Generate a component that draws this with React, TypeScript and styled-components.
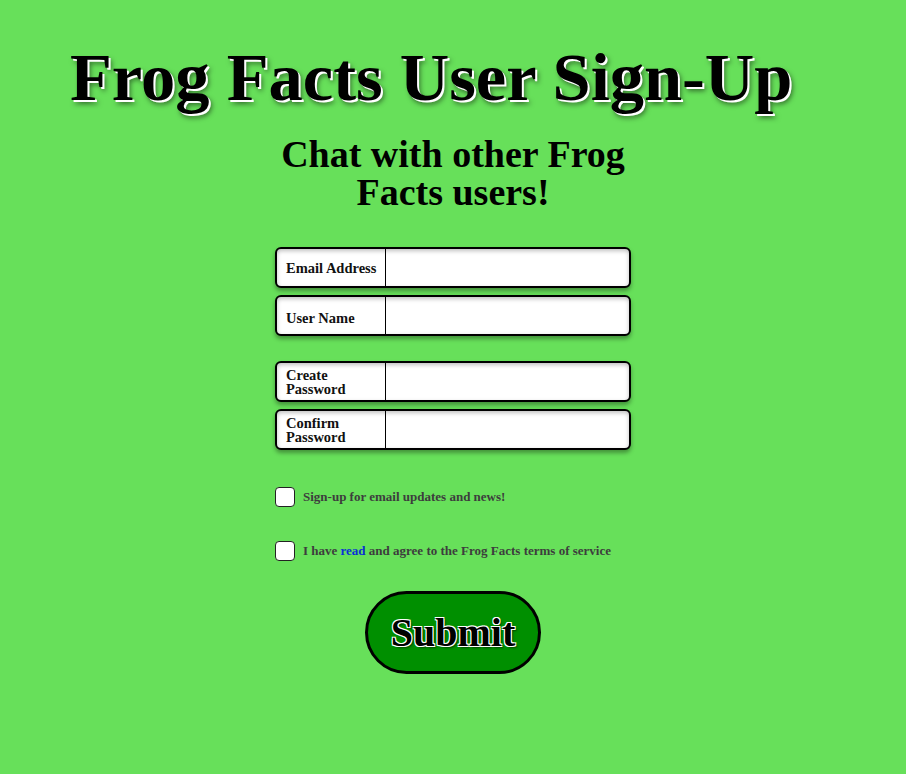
import React from 'react';
import styled, { createGlobalStyle } from 'styled-components';

const GlobalStyle = createGlobalStyle`
  html, body {
    margin: 0;
    padding: 0;
    background: #67e05a;
  }
  body {
    font-family: "Liberation Serif", "Times New Roman", serif;
  }
`;

const fields = [
  { id: 'email', label: 'Email Address', type: 'email' },
  { id: 'user', label: 'User Name', type: 'text', low: true },
];

const passwords = [
  { id: 'pass', label: 'Create Password', type: 'password' },
  { id: 'confirm', label: 'Confirm Password', type: 'password' },
];

const SignUp: React.FC = () => {
  return (
    <Page>
      <GlobalStyle />
      <Title>Frog Facts User Sign-Up</Title>
      <Column>
        <Subtitle>Chat with other Frog Facts users!</Subtitle>
        <Group>
          {fields.map(f => (
            <FieldRow key={f.id}>
              <FieldLabel htmlFor={f.id} $low={f.low}>{f.label}</FieldLabel>
              <FieldInput id={f.id} type={f.type} />
            </FieldRow>
          ))}
        </Group>
        <Group>
          {passwords.map(f => (
            <FieldRow key={f.id}>
              <FieldLabel htmlFor={f.id}>{f.label}</FieldLabel>
              <FieldInput id={f.id} type={f.type} />
            </FieldRow>
          ))}
        </Group>
        <Checks>
          <CheckRow>
            <CheckBox type="checkbox" />
            <CheckText>Sign-up for email updates and news!</CheckText>
          </CheckRow>
          <CheckRow>
            <CheckBox type="checkbox" />
            <CheckText>
              I have <ReadLink href="#">read</ReadLink> and agree to the Frog Facts terms of service
            </CheckText>
          </CheckRow>
        </Checks>
        <SubmitButton type="button">Submit</SubmitButton>
      </Column>
    </Page>
  );
};

const Page = styled.div`
  width: 100%;
  min-height: 774px;
  background: #67e05a;
  padding-top: 37px;
  box-sizing: border-box;
`;

const Title = styled.h1`
  margin: 0 0 0 70px;
  font-family: "Liberation Serif", "Times New Roman", serif;
  font-size: 68.5px;
  font-weight: 700;
  line-height: 80px;
  color: #000;
  text-shadow: 2px 2px 0 #fff, 3px 4px 5px rgba(0, 0, 0, 0.5);
  white-space: nowrap;
`;

const Column = styled.div`
  width: 356px;
  margin: 0 auto;
  display: flex;
  flex-direction: column;
  align-items: stretch;
`;

const Subtitle = styled.h2`
  margin: 18px 0 0;
  font-family: "Liberation Serif", serif;
  font-size: 38px;
  font-weight: 700;
  line-height: 38px;
  text-align: center;
  color: #000;
`;

const Group = styled.div`
  display: flex;
  flex-direction: column;
  gap: 7px;
  margin-top: 28px;

  &:first-of-type {
    margin-top: 36px;
  }

  & + & {
    margin-top: 25px;
  }
`;

const FieldRow = styled.div`
  display: flex;
  height: 41px;
  box-sizing: border-box;
  border: 2px solid #000;
  border-radius: 6px;
  background: #fff;
  overflow: hidden;
  box-shadow: 0 3px 4px rgba(0, 0, 0, 0.35), inset 0 2px 4px rgba(0, 0, 0, 0.25);
`;

const FieldLabel = styled.label<{ $low?: boolean }>`
  width: 109px;
  flex: none;
  box-sizing: border-box;
  border-right: 1px solid #000;
  padding: ${p => (p.$low ? '14px 0 0 9px' : '0 0 0 9px')};
  display: flex;
  align-items: ${p => (p.$low ? 'flex-start' : 'center')};
  font-family: "Liberation Serif", serif;
  font-size: 14.5px;
  font-weight: 700;
  line-height: 14px;
  color: #111;
`;

const FieldInput = styled.input`
  flex: 1;
  border: none;
  outline: none;
  background: transparent;
  padding: 0 8px;
  font-size: 14px;
`;

const Checks = styled.div`
  display: flex;
  flex-direction: column;
  gap: 34px;
  margin-top: 37px;
`;

const CheckRow = styled.label`
  display: flex;
  align-items: center;
  gap: 8px;
`;

const CheckBox = styled.input`
  appearance: none;
  margin: 0;
  width: 20px;
  height: 20px;
  flex: none;
  background: #fff;
  border: 1px solid #222;
  border-radius: 4px;
`;

const CheckText = styled.span`
  font-family: "Liberation Serif", serif;
  font-size: 13px;
  font-weight: 700;
  color: #3d3d3d;
  white-space: nowrap;
`;

const ReadLink = styled.a`
  color: #0a2fd6;
  text-decoration: none;
`;

const SubmitButton = styled.button`
  align-self: center;
  margin-top: 30px;
  width: 176px;
  height: 83px;
  border: 3px solid #000;
  border-radius: 42px;
  background: #008f00;
  font-family: "Liberation Serif", serif;
  font-size: 40px;
  font-weight: 700;
  color: #000;
  text-shadow: -1px -1px 0 #fff, 1px -1px 0 #fff, -1px 1px 0 #fff, 1px 1px 0 #fff, 2px 2px 2px rgba(0, 0, 0, 0.5);
  cursor: pointer;
`;

export default SignUp;
